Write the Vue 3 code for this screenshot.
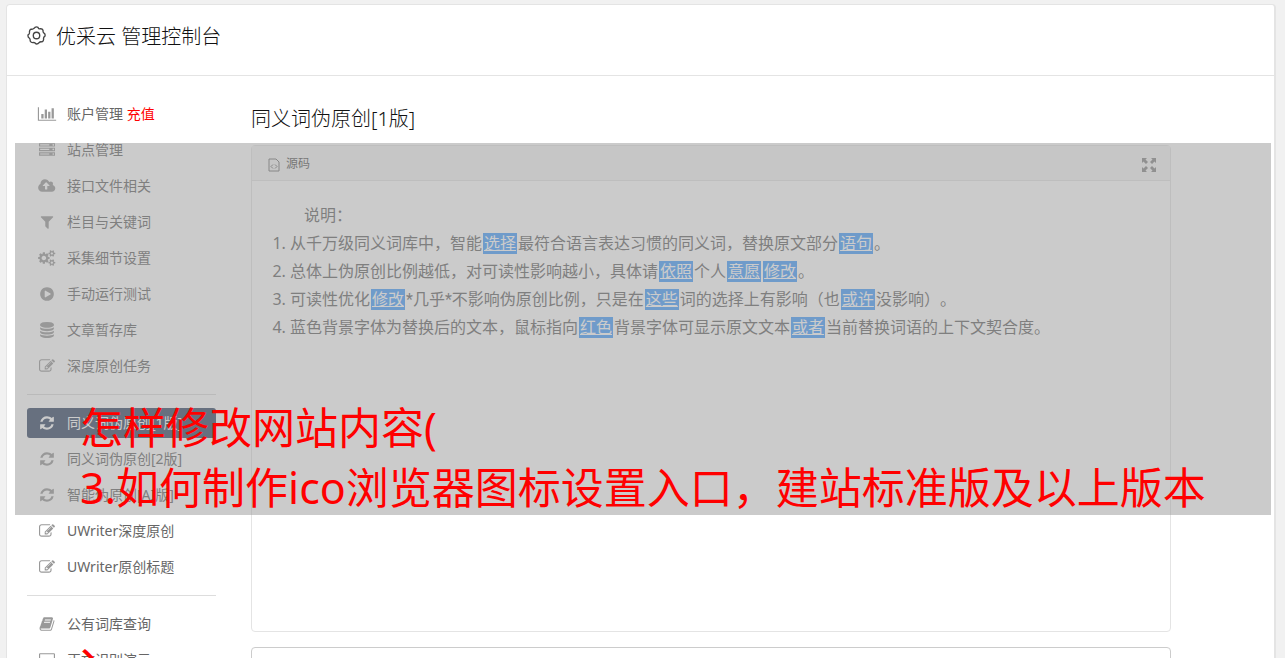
<script setup>
const icons = {
  chart: [2048, 'M640 896v512h-256v-512h256zm384-512v1024h-256v-1024h256zm1024 1152v128h-2048v-1536h128v1408h1920zm-640-896v768h-256v-768h256zm384-384v1152h-256v-1152h256z'],
  server: [1792, 'M128 1408h1024v-128h-1024v128zm0-512h1024v-128h-1024v128zm1568 448q0-40-28-68t-68-28-68 28-28 68 28 68 68 28 68-28 28-68zm-1568-960h1024v-128h-1024v128zm1568 448q0-40-28-68t-68-28-68 28-28 68 28 68 68 28 68-28 28-68zm0-512q0-40-28-68t-68-28-68 28-28 68 28 68 68 28 68-28 28-68zm96 832v384h-1792v-384h1792zm0-512v384h-1792v-384h1792zm0-512v384h-1792v-384h1792z'],
  cloud: [1856, 'M1216 864q0-14-9-23l-352-352q-9-9-23-9t-23 9l-351 351q-10 12-10 24 0 14 9 23t23 9h224v352q0 13 9.5 22.5t22.5 9.5h192q13 0 22.5-9.5t9.5-22.5v-352h224q13 0 22.5-9.5t9.5-22.5zm640 288q0 159-112.5 271.5t-271.5 112.5h-1088q-185 0-316.5-131.5t-131.5-316.5q0-130 70-240t188-165q-2-30-2-43 0-212 150-362t362-150q156 0 285.5 87t188.5 231q71-62 166-62 106 0 181 75t75 181q0 76-41 138 130 31 213.5 135.5t83.5 238.5z'],
  filter: [1792, 'M1595 295q17 41-14 70l-493 493v742q0 42-39 59-13 5-25 5-27 0-45-19l-256-256q-19-19-19-45v-486l-493-493q-31-29-14-70 17-39 59-39h1280q42 0 59 39z'],
  cogs: [1856, 'M832 896q0-106-75-181t-181-75-181 75-75 181 75 181 181 75 181-75 75-181zm768 512q0-52-38-90t-90-38-90 38-38 90q0 53 37.5 90.5t90.5 37.5 90.5-37.5 37.5-90.5zm0-1024q0-52-38-90t-90-38-90 38-38 90q0 53 37.5 90.5t90.5 37.5 90.5-37.5 37.5-90.5zm-384 421v185q0 10-7 19.5t-16 10.5l-155 24q-11 35-32 76 34 48 90 115 7 11 7 20 0 12-7 19-23 30-82.5 89.5t-78.5 59.5q-11 0-21-7l-115-90q-37 19-77 31-11 108-23 155-7 24-30 24h-186q-11 0-20-7.5t-10-17.5l-23-153q-34-10-75-31l-118 89q-7 7-20 7-11 0-21-8-144-133-144-160 0-9 7-19 10-14 41-53t47-61q-23-44-35-82l-152-24q-10-1-17-9.5t-7-19.5v-185q0-10 7-19.5t16-10.5l155-24q11-35 32-76-34-48-90-115-7-11-7-20 0-12 7-20 22-30 82-89t79-59q11 0 21 7l115 90q34-18 77-32 11-108 23-154 7-24 30-24h186q11 0 20 7.5t10 17.5l23 153q34 10 75 31l118-89q8-7 20-7 11 0 21 8 144 133 144 160 0 8-7 19-12 16-42 54t-45 60q23 48 34 82l152 23q10 2 17 10.5t7 19.5zm640 533v140q0 16-149 31-12 27-30 52 51 113 51 138 0 4-4 7-122 71-124 71-8 0-46-47t-52-68q-20 2-30 2t-30-2q-14 21-52 68t-46 47q-2 0-124-71-4-3-4-7 0-25 51-138-18-25-30-52-149-15-149-31v-140q0-16 149-31 13-29 30-52-51-113-51-138 0-4 4-7 4-2 35-20t59-34 30-16q8 0 46 46.5t52 67.5q20-2 30-2t30 2q51-71 92-112l6-2q4 0 124 70 4 3 4 7 0 25-51 138 17 23 30 52 149 15 149 31zm0-1024v140q0 16-149 31-12 27-30 52 51 113 51 138 0 4-4 7-122 71-124 71-8 0-46-47t-52-68q-20 2-30 2t-30-2q-14 21-52 68t-46 47q-2 0-124-71-4-3-4-7 0-25 51-138-18-25-30-52-149-15-149-31v-140q0-16 149-31 13-29 30-52-51-113-51-138 0-4 4-7 4-2 35-20t59-34 30-16q8 0 46 46.5t52 67.5q20-2 30-2t30 2q51-71 92-112l6-2q4 0 124 70 4 3 4 7 0 25-51 138 17 23 30 52 149 15 149 31z'],
  play: [1792, 'M896 128q209 0 385.5 103t279.5 279.5 103 385.5-103 385.5-279.5 279.5-385.5 103-385.5-103-279.5-279.5-103-385.5 103-385.5 279.5-279.5 385.5-103zm384 823q32-18 32-55t-32-55l-544-320q-31-19-64-1-32 19-32 56v640q0 37 32 56 16 8 32 8 17 0 32-9z'],
  database: [1792, 'M896 768q237 0 443-43t325-127v170q0 69-103 128t-280 93.5-385 34.5-385-34.5-280-93.5-103-128v-170q119 84 325 127t443 43zm0 768q237 0 443-43t325-127v170q0 69-103 128t-280 93.5-385 34.5-385-34.5-280-93.5-103-128v-170q119 84 325 127t443 43zm0-384q237 0 443-43t325-127v170q0 69-103 128t-280 93.5-385 34.5-385-34.5-280-93.5-103-128v-170q119 84 325 127t443 43zm0-1152q208 0 385 34.5t280 93.5 103 128v128q0 69-103 128t-280 93.5-385 34.5-385-34.5-280-93.5-103-128v-128q0-69 103-128t280-93.5 385-34.5z'],
  edit: [1792, 'M888 1184l116-116-152-152-116 116v56h96v96h56zm440-720q-16-16-33 1l-350 350q-17 17-1 33t33-1l350-350q17-17 1-33zm80 594v190q0 119-84.5 203.5t-203.5 84.5h-832q-119 0-203.5-84.5t-84.5-203.5v-832q0-119 84.5-203.5t203.5-84.5h832q63 0 117 25 15 7 18 23 3 17-9 29l-49 49q-14 14-32 8-23-6-45-6h-832q-66 0-113 47t-47 113v832q0 66 47 113t113 47h832q66 0 113-47t47-113v-126q0-13 9-22l64-64q15-15 35-7t20 29zm-96-738l288 288-672 672h-288v-288zm444 132l-92 92-288-288 92-92q28-28 68-28t68 28l152 152q28 28 28 68t-28 68z'],
  refresh: [1792, 'M1639 1056q0 5-1 7-64 268-268 434.5t-478 166.5q-146 0-282.5-55t-243.5-157l-129 129q-19 19-45 19t-45-19-19-45v-448q0-26 19-45t45-19h448q26 0 45 19t19 45-19 45l-137 137q71 66 161 102t187 36q134 0 250-65t186-179q11-17 53-117 8-23 30-23h192q13 0 22.5 9.5t9.5 22.5zm25-800v448q0 26-19 45t-45 19h-448q-26 0-45-19t-19-45 19-45l138-138q-148-137-349-137-134 0-250 65t-186 179q-11 17-53 117-8 23-30 23h-199q-13 0-22.5-9.5t-9.5-22.5v-7q65-268 270-434.5t480-166.5q146 0 284 55.5t245 156.5l130-129q19-19 45-19t45 19 19 45z'],
  book: [1792, 'M1703 478q40 57 18 129l-275 906q-19 64-76.5 107.5t-122.5 43.5h-923q-77 0-148.5-53.5t-99.5-131.5q-24-67-2-127 0-4 3-27t4-37q1-8-3-21.5t-3-19.5q2-11 8-21t16.5-23.5 16.5-23.5q23-38 45-91.5t30-91.5q3-10 .5-30t-.5-28q3-11 17-28t17-23q21-36 42-92t25-90q1-9-2.5-32t.5-28q4-13 22-30.5t22-22.5q19-26 42.5-84.5t27.5-96.5q1-8-3-25.5t-2-26.5q2-8 9-18t18-23 17-21q8-12 16.5-30.5t15-35 16-36 19.5-32 26.5-23.5 36-11.5 47.5 5.5l-1 3q38-9 51-9h761q74 0 114 56t18 130l-274 906q-36 119-71.5 153.5t-128.5 34.5h-869q-27 0-38 15-11 16-1 43 24 70 144 70h923q29 0 56-15.5t35-41.5l300-987q7-22 5-57 38 15 59 43zm-1064 2q-4 13 2 22.5t20 9.5h608q13 0 25.5-9.5t16.5-22.5l21-64q4-13-2-22.5t-20-9.5h-608q-13 0-25.5 9.5t-16.5 22.5zm-83 256q-4 13 2 22.5t20 9.5h608q13 0 25.5-9.5t16.5-22.5l21-64q4-13-2-22.5t-20-9.5h-608q-13 0-25.5 9.5t-16.5 22.5z'],
  laptop: [1792, 'M128 128h1536q128 0 128 128v1024q0 128-128 128h-1536q-128 0-128-128v-1024q0-128 128-128zm0 128v1024h1536v-1024z'],
}

const groups = [
  [
    { icon: 'chart', text: '账户管理', extra: '充值' },
    { icon: 'server', text: '站点管理' },
    { icon: 'cloud', text: '接口文件相关' },
    { icon: 'filter', text: '栏目与关键词' },
    { icon: 'cogs', text: '采集细节设置' },
    { icon: 'play', text: '手动运行测试' },
    { icon: 'database', text: '文章暂存库' },
    { icon: 'edit', text: '深度原创任务' },
  ],
  [
    { icon: 'refresh', text: '同义词伪原创[1版]', active: true },
    { icon: 'refresh', text: '同义词伪原创[2版]' },
    { icon: 'refresh', text: '智能伪原创[AI版]' },
    { icon: 'edit', text: 'UWriter深度原创' },
    { icon: 'edit', text: 'UWriter原创标题' },
  ],
  [
    { icon: 'book', text: '公有词库查询' },
    { icon: 'laptop', text: '正文识别演示' },
  ],
]

// Odd segments of each line are the replaced words.
const lines = [
  ['从千万级同义词库中，智能', '选择', '最符合语言表达习惯的同义词，替换原文部分', '语句', '。'],
  ['总体上伪原创比例越低，对可读性影响越小，具体请', '依照', '个人', '意愿', '', '修改', '。'],
  ['可读性优化', '修改', '*几乎*不影响伪原创比例，只是在', '这些', '词的选择上有影响（也', '或许', '没影响）。'],
  ['蓝色背景字体为替换后的文本，鼠标指向', '红色', '背景字体可显示原文文本', '或者', '当前替换词语的上下文契合度。'],
]
</script>

<template>
  <div class="page">
    <div class="card">
      <header class="top">
        <svg class="gear" viewBox="0 0 20 20" aria-hidden="true">
          <path d="M8.400 1.500Q10 .500 11.600 1.500Q12.200 3.300 14 2.900Q16.200 2.700 16.900 4.500Q16.500 6.500 17.900 7.500Q19.500 8.500 18.900 10.700Q17 12 17.500 13.700Q17.600 15.800 15.800 16.700Q13.800 16.200 12.700 17.600Q11.600 19.200 9.400 18.900Q8.300 17 6.500 17.400Q4.300 17.600 3.300 15.800Q3.700 13.800 2.300 12.700Q.700 11.600 1.100 9.400Q3 8.300 2.600 6.500Q2.400 4.300 4.200 3.300Q6.300 3.700 7.200 2.500Z" />
          <circle cx="10" cy="10" r="3.400" />
        </svg>
        <h1>优采云 管理控制台</h1>
      </header>
      <div class="body">
        <nav class="side">
          <ul v-for="(group, g) in groups" :key="g">
            <li v-for="item in group" :key="item.text">
              <a href="#" :class="{ active: item.active }">
                <svg class="ico" :viewBox="`0 0 ${icons[item.icon][0]} 1792`" aria-hidden="true">
                  <path fill-rule="evenodd" :d="icons[item.icon][1]" />
                </svg>
                <span>{{ item.text }}<b v-if="item.extra">{{ ' ' + item.extra }}</b></span>
              </a>
            </li>
          </ul>
        </nav>
        <main class="main">
          <h2>同义词伪原创[1版]</h2>
          <section class="editor">
            <div class="bar">
              <button type="button" class="source">
                <svg viewBox="0 0 12 14" aria-hidden="true">
                  <path d="M1 1h7l3 3v9H1zM5 6.500L3 8.500l2 2M7 6.500l2 2-2 2" />
                </svg>
                源码
              </button>
              <button type="button" class="full" aria-label="全屏">
                <svg viewBox="0 0 14 14" aria-hidden="true">
                  <path d="M0 0h5L3.500 1.500 6 4 4 6 1.500 3.500 0 5zM14 0v5l-1.500-1.500L10 6 8 4l2.500-2.500L9 0zM0 14V9l1.500 1.500L4 8l2 2-2.500 2.500L5 14zM14 14H9l1.500-1.500L8 10l2-2 2.500 2.500L14 9z" />
                </svg>
              </button>
            </div>
            <div class="content">
              <p>说明：</p>
              <ol>
                <li v-for="(line, i) in lines" :key="i">
                  <template v-for="(seg, j) in line" :key="j"><u v-if="j % 2">{{ seg }}</u><template v-else>{{ seg }}</template></template>
                </li>
              </ol>
            </div>
          </section>
          <section class="result"></section>
        </main>
      </div>
    </div>
    <div class="shade"></div>
    <div class="caption">
      <div>怎样修改网站内容(<br />3.如何制作ico浏览器图标设置入口，建站标准版及以上版本</div>
      <div>、</div>
    </div>
  </div>
</template>

<style>
body {
  background: #f1f1f1;
}
</style>

<style scoped>
.page {
  position: relative;
  height: 100vh;
  overflow: hidden;
  padding: 4px 9px 0 6px;
  box-sizing: border-box;
  font-family: "Noto Sans", "Noto Sans CJK SC", sans-serif;
  text-spacing-trim: space-all;
  color: #333;
}
.card {
  background: #fff;
  border: 1px solid #e4e4e4;
  border-right-width: 2px;
  border-radius: 4px;
  min-height: 100vh;
}
.top {
  display: flex;
  align-items: center;
  gap: 10px;
  height: 71px;
  padding: 0 20px 7px;
  box-sizing: border-box;
  border-bottom: 1px solid #e4e4e4;
}
.gear {
  width: 19px;
  height: 19px;
  margin-bottom: 3px;
  fill: none;
  stroke: #444;
  stroke-width: 1.400;
}
h1, h2 {
  margin: 0;
  font-size: 20px;
  line-height: 28px;
  font-weight: 300;
  color: #111;
}
.body {
  display: flex;
  gap: 35px;
  padding: 23px 103px 0 20px;
}
.side {
  flex: none;
  width: 189px;
}
ul {
  list-style: none;
  margin: 0;
  padding: 0;
  display: grid;
  gap: 6px;
}
ul + ul {
  margin-top: 13px;
  padding-top: 13px;
  border-top: 1px solid #ddd;
}
.side a {
  display: flex;
  align-items: center;
  gap: 10px;
  height: 30px;
  padding: 0 10px;
  border-radius: 3px;
  font-size: 14px;
  color: #666;
  text-decoration: none;
}
.side a.active {
  background: #364866;
  color: #fff;
}
.side span {
  padding-bottom: 2px;
}
.side b {
  font-weight: 400;
  color: #f00;
}
.ico {
  width: 20px;
  height: 16px;
  fill: #999;
}
.active .ico {
  fill: #fff;
}
.main {
  flex: 1;
  min-width: 0;
}
h2 {
  margin: 6px 0 12px;
}
.editor {
  min-height: 485px;
  border: 1px solid #e4e4e4;
  border-radius: 4px;
}
.bar {
  display: flex;
  justify-content: space-between;
  align-items: center;
  height: 34px;
  padding: 0 14px 0 16px;
  background: #f5f5f5;
  border-bottom: 1px solid #e4e4e4;
}
button {
  display: flex;
  align-items: center;
  gap: 6px;
  padding: 0;
  border: 0;
  background: none;
  font: inherit;
  font-size: 12px;
  color: #555;
}
button svg {
  height: 14px;
  margin-top: 3px;
}
.source svg {
  width: 12px;
  fill: none;
  stroke: #777;
}
.full svg {
  width: 14px;
  fill: #888;
}
.content {
  padding: 20px;
  font-size: 16px;
  line-height: 28px;
  color: #666;
}
p {
  margin: 0;
  text-indent: 2em;
}
ol {
  margin: 0;
  padding-left: 18px;
  font-family: Roboto, "Noto Sans CJK SC", sans-serif;
}
ol li {
  height: 28px;
  white-space: nowrap;
}
ol li::marker {
  font-family: "Noto Sans", sans-serif;
}
u {
  margin: 0 1px;
  padding: 1px;
  background: #469efc;
  color: #fff;
}
.result {
  margin-top: 15px;
  min-height: 120px;
  border: 1px solid #ccc;
  border-radius: 4px;
}
.shade {
  position: absolute;
  left: 15px;
  right: 14px;
  top: 143px;
  height: 372px;
  background: rgba(152, 152, 152, 0.5);
}
.caption {
  position: absolute;
  left: 80px;
  top: 398px;
  display: grid;
  gap: 94px;
  font-size: 43px;
  line-height: 60px;
  color: #f00;
  white-space: nowrap;
}
</style>
